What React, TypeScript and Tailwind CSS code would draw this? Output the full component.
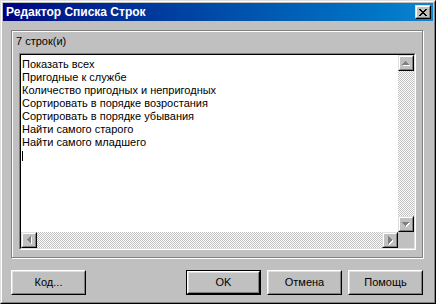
import type { ReactNode } from 'react';

const lines = [
  'Показать всех',
  'Пригодные к службе',
  'Количество пригодных и непригодных',
  'Сортировать в порядке возростания',
  'Сортировать в порядке убывания',
  'Найти самого старого',
  'Найти самого младшего',
];

// classic 3D raised edge (scrollbar buttons, close box)
function Raised({ children, className = '' }: { children?: ReactNode; className?: string }) {
  return (
    <div className={`border border-t-[#dfdfdf] border-l-[#dfdfdf] border-r-black border-b-black bg-[#c0c0c0] ${className}`}>
      <div className="w-full h-full border border-t-white border-l-white border-r-[#808080] border-b-[#808080] flex items-center justify-center">
        {children}
      </div>
    </div>
  );
}

function Arrow({ dir }: { dir: 'up' | 'down' | 'left' | 'right' }) {
  const pts = {
    up: '3,0 4,0 7,4 0,4',
    down: '0,0 7,0 4,4 3,4',
    left: '0,3 0,4 4,8 4,0',
    right: '0,0 4,4 4,4 0,8',
  }[dir];
  const vertical = dir === 'up' || dir === 'down';
  const w = vertical ? 8 : 5;
  const h = vertical ? 5 : 9;
  return (
    <svg width={w} height={h} viewBox={`0 0 ${w} ${h}`} shapeRendering="crispEdges">
      <polygon points={pts} fill="#fff" transform="translate(1 1)" />
      <polygon points={pts} fill="#808080" />
    </svg>
  );
}

function Button({ label, isDefault = false }: { label: string; isDefault?: boolean }) {
  const inner = (
    <div className="w-full h-full border border-t-white border-l-white border-r-black border-b-black">
      <div className="w-full h-full border border-t-[#dfdfdf] border-l-[#dfdfdf] border-r-[#808080] border-b-[#808080] flex items-center justify-center text-[11px] text-black">
        {label}
      </div>
    </div>
  );
  return (
    <div className={`w-[75px] h-[25px] bg-[#c0c0c0] ${isDefault ? 'border border-black' : ''}`}>
      {inner}
    </div>
  );
}

const track =
  'bg-[repeating-conic-gradient(#c0c0c0_0_25%,#fff_0_50%)] bg-[length:2px_2px]';

export default function App() {
  return (
    <div
      className="w-[436px] h-[304px] bg-[#c0c0c0] border border-t-[#dfdfdf] border-l-[#dfdfdf] border-r-black border-b-black"
      style={{ fontFamily: '"Liberation Sans", Arial, sans-serif' }}
    >
      <div className="w-full h-full border border-t-white border-l-white border-r-[#808080] border-b-[#808080] p-px flex flex-col">
        {/* title bar */}
        <div className="h-[18px] flex items-center justify-between bg-gradient-to-r from-[#000080] to-[#1084d0] pl-[3px] pr-[2px]">
          <span className="text-white font-bold text-[12px] leading-none">Редактор Списка Строк</span>
          <Raised className="w-[16px] h-[14px]">
            <svg width="8" height="7" viewBox="0 0 8 7" shapeRendering="crispEdges">
              <path d="M0 0h2v1h-2zM6 0h2v1h-2zM1 1h2v1h-2zM5 1h2v1h-2zM2 2h4v1h-4zM3 3h2v1h-2zM2 4h4v1h-4zM1 5h2v1h-2zM5 5h2v1h-2zM0 6h2v1h-2zM6 6h2v1h-2z" fill="#000" />
            </svg>
          </Raised>
        </div>

        {/* group frame */}
        <div className="mt-[9px] ml-[8px] w-[412px] h-[228px] border border-[#808080] [box-shadow:1px_1px_0_#fff,inset_1px_1px_0_#fff] pt-[4px] flex flex-col">
          <div className="pl-[4px] text-[11px] leading-[13px] text-black">7 строк(и)</div>

          {/* memo */}
          <div className="mt-[5px] ml-[7px] w-[397px] h-[197px] border border-t-[#808080] border-l-[#808080] border-r-white border-b-white">
            <div className="w-full h-full border border-t-black border-l-black border-r-[#dfdfdf] border-b-[#dfdfdf] bg-white grid grid-cols-[1fr_16px] grid-rows-[1fr_16px]">
              <div className="pl-px pt-[3px] text-[11px] leading-[13px] text-black overflow-hidden whitespace-nowrap">
                {lines.map(l => (
                  <div key={l}>{l}</div>
                ))}
                <div className="h-[13px] flex items-center">
                  <span className="inline-block w-px h-[10px] bg-black" />
                </div>
              </div>

              <div className="flex flex-col">
                <Raised className="w-[16px] h-[16px]">
                  <Arrow dir="up" />
                </Raised>
                <div className={`flex-1 ${track}`} />
                <Raised className="w-[16px] h-[16px]">
                  <Arrow dir="down" />
                </Raised>
              </div>

              <div className="flex">
                <Raised className="w-[16px] h-[16px]">
                  <Arrow dir="left" />
                </Raised>
                <div className={`flex-1 ${track}`} />
                <Raised className="w-[16px] h-[16px]">
                  <Arrow dir="right" />
                </Raised>
              </div>
              <div className="bg-[#c0c0c0]" />
            </div>
          </div>
        </div>

        {/* buttons */}
        <div className="mt-[12px] ml-[8px] mr-[10px] flex items-start">
          <Button label="Код..." />
          <div className="flex-1" />
          <div className="flex gap-[6px]">
            <Button label="OK" isDefault />
            <Button label="Отмена" />
            <Button label="Помощь" />
          </div>
        </div>
      </div>
    </div>
  );
}
